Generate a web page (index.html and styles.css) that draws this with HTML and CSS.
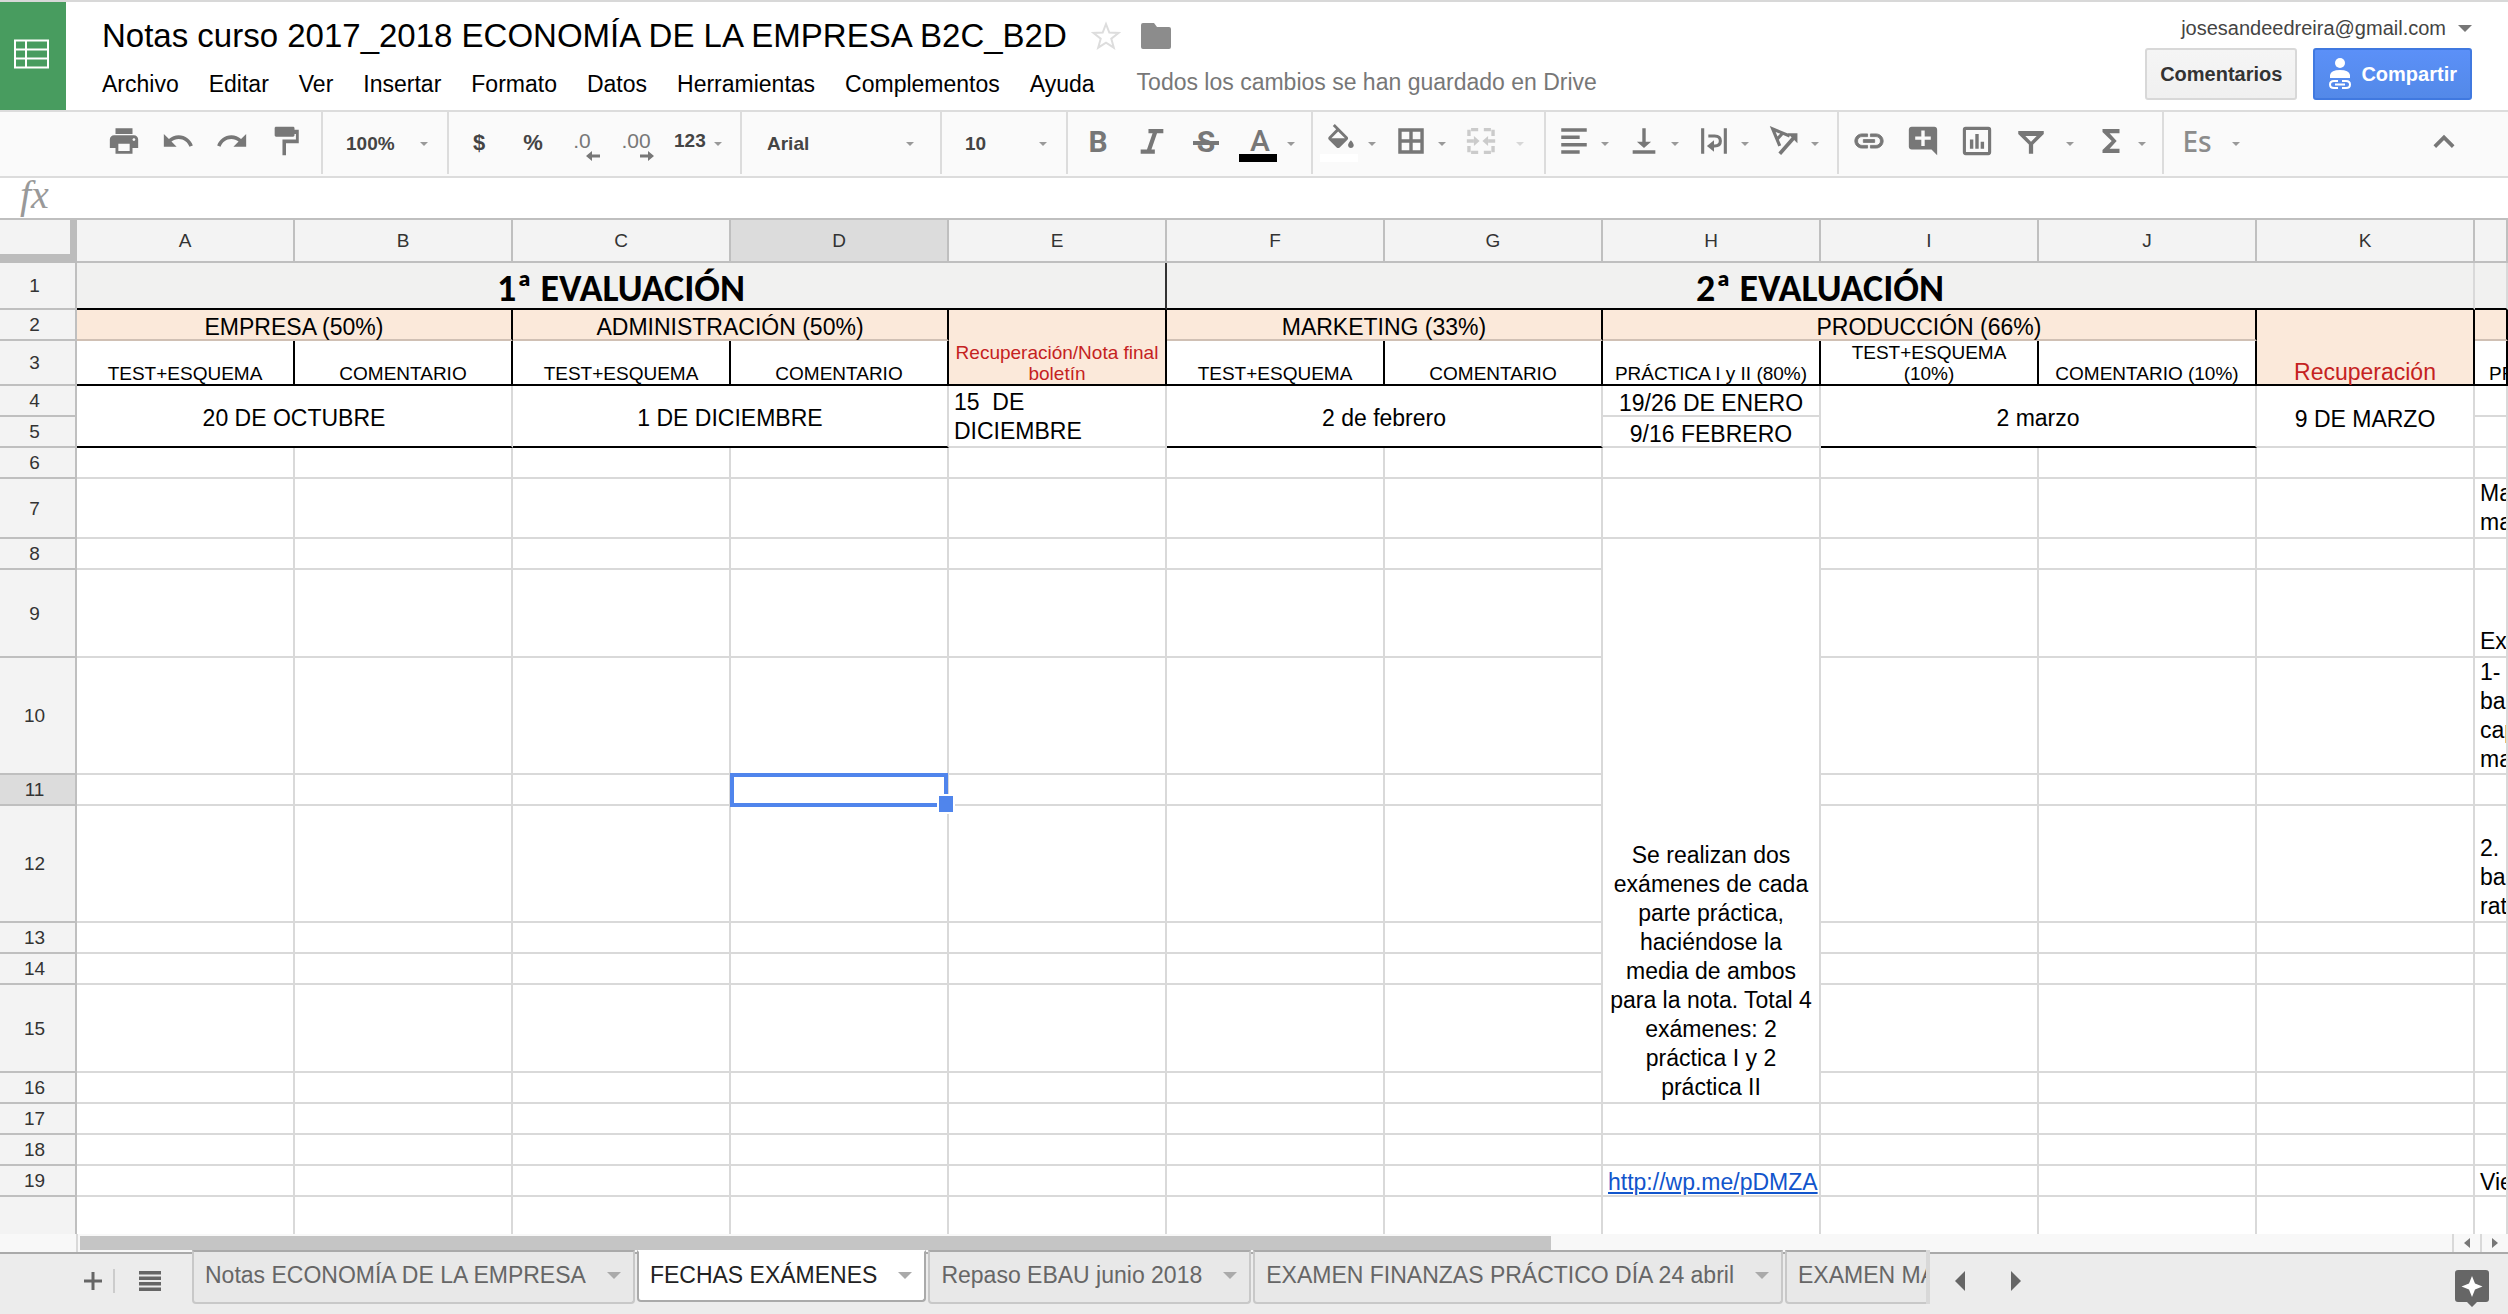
FILE: index.html
```html
<!DOCTYPE html>
<html lang="es">
<head>
    <meta charset="UTF-8">
    <meta name="viewport" content="width=device-width, initial-scale=1.0">
    <title>Notas curso 2017_2018 ECONOMÍA DE LA EMPRESA B2C_B2D</title>
    <link rel="stylesheet" href="styles.css">
</head>
<body>
    <header class="header">
        <a class="logo" href="#" aria-label="Hojas de cálculo">
            <svg width="35" height="30" viewBox="0 0 35 30" fill="none" stroke="#fff" stroke-width="2">
                <path d="M1 1.500H34V28.500H1ZM1 10.500H34M1 19.500H34M12 1V29"/>
            </svg>
        </a>
        <div class="header-main">
            <div class="title-row">
                <h1 class="title">Notas curso 2017_2018 ECONOMÍA DE LA EMPRESA B2C_B2D</h1>
                <button class="title-btn" aria-label="Destacar">
                    <svg width="30" height="30" viewBox="0 0 30 30" fill="none" stroke="#ddd" stroke-width="2">
                        <path d="M15 3l3.300 8.600 9.200.400-7.200 5.700 2.500 9L15 21.600l-7.800 5.100 2.500-9L2.500 12l9.200-.4z"/>
                    </svg>
                </button>
                <button class="title-btn" aria-label="Carpeta">
                    <svg width="30" height="26" viewBox="0 0 30 26" fill="#8c8c8c">
                        <path d="M2 0h11l3 4h12q2 0 2 2v18q0 2-2 2H2q-2 0-2-2V2q0-2 2-2z"/>
                    </svg>
                </button>
            </div>
            <nav class="menu">
                <button>Archivo</button>
                <button>Editar</button>
                <button>Ver</button>
                <button>Insertar</button>
                <button>Formato</button>
                <button>Datos</button>
                <button>Herramientas</button>
                <button>Complementos</button>
                <button>Ayuda</button>
                <span class="saved">Todos los cambios se han guardado en Drive</span>
            </nav>
        </div>
        <div class="account">
            <button class="email">josesandeedreira@gmail.com <span class="triangle"></span></button>
            <div class="account-btns">
                <button class="btn">Comentarios</button>
                <button class="btn btn-share">
                    <svg width="24" height="32" viewBox="0 0 24 32" fill="#fff">
                        <ellipse cx="12" cy="5" rx="5" ry="5"/>
                        <path d="M2 20v-3q1-5 10-5t10 5v3z"/>
                        <path d="M10 23H6q-4 0-4 3.500T6 30h4M14 23h4q4 0 4 3.500T18 30h-4M7 26.500h10" fill="none" stroke="#fff" stroke-width="2"/>
                    </svg>
                    Compartir
                </button>
            </div>
        </div>
    </header>

    <div class="toolbar">
        <div class="group group-first">
            <button class="tool" aria-label="Imprimir"><svg class="icon" viewBox="0 0 24 24"><path d="M19 8H5c-1.660 0-3 1.340-3 3v6h4v4h12v-4h4v-6c0-1.660-1.340-3-3-3zm-3 11H8v-5h8v5zm3-7c-.55 0-1-.45-1-1s.45-1 1-1 1 .45 1 1-.45 1-1 1zm-1-9H6v4h12V3z"/></svg></button>
            <button class="tool" aria-label="Deshacer"><svg class="icon" viewBox="0 0 24 24"><path d="M12.500 8c-2.650 0-5.050.99-6.900 2.600L2 7v9h9l-3.620-3.620c1.390-1.160 3.160-1.880 5.120-1.880 3.540 0 6.550 2.310 7.600 5.500l2.370-.78C21.080 11.030 17.150 8 12.500 8z"/></svg></button>
            <button class="tool" aria-label="Rehacer"><svg class="icon" viewBox="0 0 24 24"><path d="M18.400 10.600C16.550 8.990 14.150 8 11.500 8c-4.650 0-8.580 3.030-9.960 7.220L3.900 16c1.050-3.190 4.050-5.500 7.600-5.500 1.950 0 3.730.72 5.120 1.880L13 16h9V7l-3.600 3.600z"/></svg></button>
            <button class="tool" aria-label="Copiar formato"><svg class="icon" viewBox="0 0 24 24"><path d="M18 4V3c0-.55-.45-1-1-1H5c-.55 0-1 .45-1 1v5c0 .55.45 1 1 1h12c.55 0 1-.45 1-1V7h1v4H9.500v11H12v-8.500h9V4h-3z"/></svg></button>
        </div>
        <div class="group">
            <label class="pick pick-small">
                <select aria-label="Zoom"><option>100%</option></select>
                <span class="caret"></span>
            </label>
        </div>
        <div class="group">
            <button class="tool tool-text">$</button>
            <button class="tool tool-text">%</button>
            <button class="tool decimals">.0<svg width="14" height="10" viewBox="0 0 14 10"><path d="M6 0v3.500h8v3H6V10L0 5z"/></svg></button>
            <button class="tool decimals">.00<svg width="14" height="10" viewBox="0 0 14 10"><path d="M8 0v3.500H0v3h8V10l6-5z"/></svg></button>
            <button class="tool tool-drop number-format">123 <span class="caret"></span></button>
        </div>
        <div class="group">
            <label class="pick pick-font">
                <select aria-label="Fuente"><option>Arial</option></select>
                <span class="caret"></span>
            </label>
        </div>
        <div class="group">
            <label class="pick pick-small">
                <select aria-label="Tamaño de fuente"><option>10</option></select>
                <span class="caret"></span>
            </label>
        </div>
        <div class="group">
            <button class="tool letter letter-bold">B</button>
            <button class="tool" aria-label="Cursiva"><svg class="icon line-icon" viewBox="0 0 24 24"><path d="M9.500 5H20M4 19.500H14M14.500 5L9.500 19.500" stroke-width="3"/></svg></button>
            <button class="tool letter letter-bold strike">S</button>
            <button class="tool tool-drop letter"><span class="slot color-text">A</span><span class="caret"></span></button>
        </div>
        <div class="group group-tight">
            <button class="tool tool-drop" aria-label="Color de relleno"><span class="slot color-fill"><svg class="icon" viewBox="0 0 24 24"><path d="M16.560 8.940L7.620 0 6.210 1.410l2.380 2.380-5.150 5.150c-.59.59-.59 1.540 0 2.120l5.500 5.500c.29.29.68.44 1.060.44s.77-.15 1.060-.44l5.500-5.500c.59-.58.59-1.530 0-2.120zM5.210 10L10 5.210 14.790 10H5.210zM19 11.500s-2 2.170-2 3.500c0 1.100.9 2 2 2s2-.9 2-2c0-1.330-2-3.500-2-3.500z"/></svg></span><span class="caret"></span></button>
            <button class="tool tool-drop" aria-label="Bordes"><span class="slot"><svg class="icon line-icon" viewBox="0 0 24 24"><path d="M4.200 4.200H19.800V19.800H4.200ZM12 4V20M4 12H20" stroke-width="2.400"/></svg></span><span class="caret"></span></button>
            <button class="tool tool-drop tool-wide" aria-label="Combinar celdas" disabled><span class="slot"><svg class="icon line-icon" viewBox="0 0 24 24"><path d="M10 4H3.500V8.500M14 4H20.500V8.500M10 20H3.500V15.500M14 20H20.500V15.500" stroke-width="2.400" stroke-dasharray="5 1.500"/><path d="M2 12H7M22 12H17" stroke-width="2.400"/><path class="solid" d="M7 8.500L11 12L7 15.500ZM17 8.500L13 12L17 15.500Z"/></svg></span><span class="caret"></span></button>
        </div>
        <div class="group group-tight">
            <button class="tool tool-drop" aria-label="Alineación horizontal"><span class="slot"><svg class="icon" viewBox="0 0 24 24"><path d="M3 3h18v2.400H3zM3 8.200h13v2.400H3zM3 13.400h18v2.400H3zM3 18.600h13V21H3z"/></svg></span><span class="caret"></span></button>
            <button class="tool tool-drop" aria-label="Alineación vertical"><span class="slot"><svg class="icon" viewBox="0 0 24 24"><path d="M10.800 3h2.400v9.500H17L12 17l-5-4.500h3.800zM4 18.600h16V21H4z"/></svg></span><span class="caret"></span></button>
            <button class="tool tool-drop" aria-label="Ajuste de texto"><span class="slot"><svg class="icon line-icon" viewBox="0 0 24 24"><path d="M4 3V21M20 3V21M8 8.500H12.500Q16.500 8.500 16.500 12T12.500 15.500H11" stroke-width="2.200"/><path class="solid" d="M7 15.500L12 11.500V19.500Z"/></svg></span><span class="caret"></span></button>
            <button class="tool tool-drop" aria-label="Rotación de texto"><span class="slot"><svg class="icon line-icon" viewBox="0 0 24 24"><path d="M9 15.500L4 3.500L16 8.500M7 11L11 6.500" stroke-width="2.200"/><path d="M9 21L20 8.500" stroke-width="2.600"/><path class="solid" d="M21.500 6.500V13.500L14.500 6.500Z"/></svg></span><span class="caret"></span></button>
        </div>
        <div class="group">
            <button class="tool" aria-label="Insertar enlace"><svg class="icon" viewBox="0 0 24 24"><path d="M3.900 12c0-1.710 1.390-3.100 3.100-3.100h4V7H7c-2.760 0-5 2.240-5 5s2.240 5 5 5h4v-1.900H7c-1.710 0-3.100-1.390-3.100-3.100zM8 13h8v-2H8v2zm9-6h-4v1.900h4c1.710 0 3.100 1.390 3.100 3.100s-1.390 3.100-3.100 3.100h-4V17h4c2.760 0 5-2.240 5-5s-2.240-5-5-5z" stroke="#777" stroke-width=".6"/></svg></button>
            <button class="tool" aria-label="Insertar comentario"><svg class="icon" viewBox="0 0 24 24"><path d="M21.990 4c0-1.100-.89-2-1.990-2H4c-1.100 0-2 .9-2 2v12c0 1.100.9 2 2 2h14l4 4-.01-18zM17.500 11.200h-4.300v4.300h-2.400v-4.300H6.500V8.800h4.300V4.500h2.400v4.300h4.300z"/></svg></button>
            <button class="tool" aria-label="Insertar gráfico"><svg class="icon" viewBox="0 0 24 24"><path fill-rule="evenodd" d="M4 2h16q2 0 2 2v16q0 2-2 2H4q-2 0-2-2V4q0-2 2-2zM4.200 4.200V19.800H19.800V4.200zM7 11h2.400v6.500H7zM10.800 7h2.400v10.500h-2.400zM14.600 12.500H17v5h-2.400z"/></svg></button>
            <button class="tool tool-drop tool-wide" aria-label="Filtrar"><span class="slot"><svg class="icon" viewBox="0 0 24 24"><path fill-rule="evenodd" d="M3 5h18v2l-7.500 7.500V21h-3v-6.500L3 7zM8 8.500l4 4 4-4z"/></svg></span><span class="caret"></span></button>
            <button class="tool tool-drop" aria-label="Funciones"><span class="slot"><svg class="icon" viewBox="0 0 24 24"><path d="M18 3.500H6v2.200L12.500 12 6 18.300v2.200h12v-3h-7l5-5.500-5-5.500h7z"/></svg></span><span class="caret"></span></button>
        </div>
        <div class="group group-last">
            <button class="tool tool-drop tool-wide lang"><span class="slot">Es</span><span class="caret"></span></button>
        </div>
        <button class="tool collapse" aria-label="Ocultar menús"><svg class="icon line-icon" viewBox="0 0 24 24"><path d="M5.500 16L12 9.500L18.500 16" stroke-width="2.600"/></svg></button>
    </div>

    <div class="formula">
        <label class="fx" for="formula">fx</label>
        <input id="formula" type="text">
    </div>

    <main class="sheet">
        <table>
            <thead>
                <tr>
                    <th class="corner"></th>
                    <th>A</th>
                    <th>B</th>
                    <th>C</th>
                    <th class="current">D</th>
                    <th>E</th>
                    <th>F</th>
                    <th>G</th>
                    <th>H</th>
                    <th>I</th>
                    <th>J</th>
                    <th>K</th>
                    <th class="rest"></th>
                </tr>
            </thead>
            <tbody>
                <tr class="row-term">
                    <th>1</th>
                    <td class="term end" colspan="5">1ª EVALUACIÓN</td>
                    <td class="term" colspan="6">2ª EVALUACIÓN</td>
                    <td class="term"></td>
                </tr>
                <tr>
                    <th>2</th>
                    <td class="block" colspan="2">EMPRESA (50%)</td>
                    <td class="block" colspan="2">ADMINISTRACIÓN (50%)</td>
                    <td class="block retake small" rowspan="2">Recuperación/Nota final boletín</td>
                    <td class="block" colspan="2">MARKETING (33%)</td>
                    <td class="block" colspan="3">PRODUCCIÓN (66%)</td>
                    <td class="block retake" rowspan="2">Recuperación</td>
                    <td class="block"></td>
                </tr>
                <tr class="row-tests">
                    <th>3</th>
                    <td>TEST+ESQUEMA</td>
                    <td>COMENTARIO</td>
                    <td>TEST+ESQUEMA</td>
                    <td>COMENTARIO</td>
                    <td>TEST+ESQUEMA</td>
                    <td>COMENTARIO</td>
                    <td>PRÁCTICA I y II (80%)</td>
                    <td>TEST+ESQUEMA<br>(10%)</td>
                    <td>COMENTARIO (10%)</td>
                    <td class="cut">PR</td>
                </tr>
                <tr>
                    <th>4</th>
                    <td class="date underline" colspan="2" rowspan="2">20 DE OCTUBRE</td>
                    <td class="date underline" colspan="2" rowspan="2">1 DE DICIEMBRE</td>
                    <td class="spaced" rowspan="2">15  DE<br>DICIEMBRE</td>
                    <td class="date underline" colspan="2" rowspan="2">2 de febrero</td>
                    <td class="date">19/26 DE ENERO</td>
                    <td class="date underline" colspan="2" rowspan="2">2 marzo</td>
                    <td class="date" rowspan="2">9 DE MARZO</td>
                    <td></td>
                </tr>
                <tr>
                    <th>5</th>
                    <td class="date">9/16 FEBRERO</td>
                    <td></td>
                </tr>
                <tr>
                    <th>6</th>
                    <td></td><td></td><td></td><td></td><td></td><td></td><td></td><td></td><td></td><td></td><td></td><td></td>
                </tr>
                <tr class="lines-2">
                    <th>7</th>
                    <td></td><td></td><td></td><td></td><td></td><td></td><td></td><td></td><td></td><td></td><td></td>
                    <td class="cut"><div>Ma<br>ma</div></td>
                </tr>
                <tr>
                    <th>8</th>
                    <td></td><td></td><td></td><td></td><td></td><td></td><td></td>
                    <td class="note" rowspan="9">Se realizan dos exámenes de cada parte práctica, haciéndose la media de ambos para la nota. Total 4 exámenes: 2 práctica I y 2 práctica II</td>
                    <td></td><td></td><td></td><td></td>
                </tr>
                <tr class="lines-3">
                    <th>9</th>
                    <td></td><td></td><td></td><td></td><td></td><td></td><td></td><td></td><td></td><td></td>
                    <td class="cut"><div>Ex</div></td>
                </tr>
                <tr class="lines-4">
                    <th>10</th>
                    <td></td><td></td><td></td><td></td><td></td><td></td><td></td><td></td><td></td><td></td>
                    <td class="cut"><div>1-<br>ba<br>cap<br>ma</div></td>
                </tr>
                <tr>
                    <th class="current">11</th>
                    <td></td><td></td><td></td>
                    <td class="selected"><span class="selection"></span></td>
                    <td></td><td></td><td></td><td></td><td></td><td></td><td></td>
                </tr>
                <tr class="lines-4">
                    <th>12</th>
                    <td></td><td></td><td></td><td></td><td></td><td></td><td></td><td></td><td></td><td></td>
                    <td class="cut"><div>2.<br>ba<br>rat</div></td>
                </tr>
                <tr>
                    <th>13</th>
                    <td></td><td></td><td></td><td></td><td></td><td></td><td></td><td></td><td></td><td></td><td></td>
                </tr>
                <tr>
                    <th>14</th>
                    <td></td><td></td><td></td><td></td><td></td><td></td><td></td><td></td><td></td><td></td><td></td>
                </tr>
                <tr class="lines-3">
                    <th>15</th>
                    <td></td><td></td><td></td><td></td><td></td><td></td><td></td><td></td><td></td><td></td><td></td>
                </tr>
                <tr>
                    <th>16</th>
                    <td></td><td></td><td></td><td></td><td></td><td></td><td></td><td></td><td></td><td></td><td></td>
                </tr>
                <tr>
                    <th>17</th>
                    <td></td><td></td><td></td><td></td><td></td><td></td><td></td><td></td><td></td><td></td><td></td><td></td>
                </tr>
                <tr>
                    <th>18</th>
                    <td></td><td></td><td></td><td></td><td></td><td></td><td></td><td></td><td></td><td></td><td></td><td></td>
                </tr>
                <tr>
                    <th>19</th>
                    <td></td><td></td><td></td><td></td><td></td><td></td><td></td>
                    <td class="cut link"><a href="#">http://wp.me/pDMZA</a></td>
                    <td></td><td></td><td></td>
                    <td class="cut link">Vie</td>
                </tr>
                <tr class="lines-3">
                    <th></th>
                    <td></td><td></td><td></td><td></td><td></td><td></td><td></td><td></td><td></td><td></td><td></td><td></td>
                </tr>
            </tbody>
        </table>
    </main>

    <div class="scrollbar">
        <div class="scroll-track"><div class="scroll-thumb"></div></div>
        <button class="scroll-btn" aria-label="Izquierda"><svg width="6" height="10" viewBox="0 0 6 10"><path d="M6 0v10L0 5z"/></svg></button>
        <button class="scroll-btn" aria-label="Derecha"><svg width="6" height="10" viewBox="0 0 6 10"><path d="M0 0v10l6-5z"/></svg></button>
    </div>

    <footer class="bottom">
        <button class="sheet-btn sheet-add" aria-label="Añadir hoja"><svg width="18" height="18" viewBox="0 0 18 18"><path d="M7.500 0h3v7.500H18v3h-7.500V18h-3v-7.500H0v-3h7.500z"/></svg></button>
        <button class="sheet-btn sheet-all" aria-label="Todas las hojas"><svg width="22" height="20" viewBox="0 0 22 20"><path d="M0 0h22v3.500H0zM0 5.500h22V9H0zM0 11h22v3.500H0zM0 16.500h22V20H0z"/></svg></button>
        <div class="tabs">
            <button class="tab">Notas ECONOMÍA DE LA EMPRESA <span class="triangle"></span></button>
            <button class="tab tab-active">FECHAS EXÁMENES <span class="triangle"></span></button>
            <button class="tab">Repaso EBAU junio 2018 <span class="triangle"></span></button>
            <button class="tab">EXAMEN FINANZAS PRÁCTICO DÍA 24 abril <span class="triangle"></span></button>
            <button class="tab tab-cut">EXAMEN MA</button>
        </div>
        <div class="tabs-nav">
            <button aria-label="Hojas anteriores"><svg width="10" height="20" viewBox="0 0 10 20"><path d="M10 0v20L0 10z"/></svg></button>
            <button aria-label="Hojas siguientes"><svg width="10" height="20" viewBox="0 0 10 20"><path d="M0 0v20l10-10z"/></svg></button>
        </div>
        <button class="explore" aria-label="Explorar">
            <svg width="34" height="38" viewBox="0 0 34 38">
                <path fill="#666" d="M3 0h28q3 0 3 3v26q0 3-3 3h-9l-5 5-5-5H3q-3 0-3-3V3q0-3 3-3z"/>
                <path fill="#fff" d="M17 6l3 7.500 7.500 3L20 19.500 17 27l-3-7.500-7.500-3 7.500-3z"/>
            </svg>
        </button>
    </footer>
</body>
</html>
```
FILE: styles.css
```css
* {
    box-sizing: border-box;
}
body {
    margin: 0;
    height: 100vh;
    display: flex;
    flex-direction: column;
    overflow: hidden;
    font-family: "Liberation Sans", Arial, sans-serif;
    font-size: 23px;
    color: #000;
    background-color: #fff;
}
button, input, select {
    font: inherit;
    color: inherit;
    border: 0;
    padding: 0;
    background: none;
}
svg {
    display: block;
}

/* header */
.header {
    flex: none;
    display: flex;
    height: 112px;
    border-top: 2px solid #d8d8d8;
    border-bottom: 2px solid #dcdcdc;
}
.logo {
    width: 66px;
    padding-right: 4px;
    padding-bottom: 4px;
    display: flex;
    align-items: center;
    justify-content: center;
    background-color: #489c5f;
}
.header-main {
    padding: 12px 0 0 36px;
}
.title-row {
    display: flex;
    align-items: center;
    height: 44px;
}
.title {
    margin: 0 4px 0 0;
    font-size: 33px;
    font-weight: normal;
    line-height: 44px;
}
.title-btn {
    margin: 0 0 0 20px;
}
.menu {
    display: flex;
    align-items: center;
    gap: 30px;
    margin-top: 8px;
    line-height: 32px;
}
.saved {
    margin-left: 12px;
    padding-bottom: 4px;
    color: #777;
}
.account {
    margin-left: auto;
    padding: 12px 36px 0 0;
    display: flex;
    flex-direction: column;
    align-items: flex-end;
    gap: 6px;
    font-size: 20px;
}
.email {
    display: flex;
    align-items: center;
    gap: 12px;
    line-height: 28px;
    color: #444;
}
.triangle {
    border: 7px solid transparent;
    border-top-color: #777;
    border-bottom: 0;
}
.account-btns {
    display: flex;
    gap: 16px;
}
.btn {
    display: flex;
    align-items: center;
    gap: 9px;
    height: 52px;
    padding: 0 13px;
    border: 2px solid #d8d8d8;
    border-radius: 3px;
    background: linear-gradient(#f5f5f5, #f0f0f0);
    color: #333;
    font-weight: bold;
}
.btn-share {
    border-color: #4079e0;
    background: linear-gradient(#5b90f8, #5389e8);
    color: #fff;
}

/* toolbar */
.toolbar {
    flex: none;
    display: flex;
    align-items: flex-start;
    height: 66px;
    border-bottom: 2px solid #dcdcdc;
    background-color: #fafafa;
    color: #444;
    font-size: 19px;
    font-weight: bold;
}
.group {
    display: flex;
    height: 62px;
    padding: 0 8px 0 3px;
    border-right: 2px solid #dcdcdc;
}
.group-first {
    padding-left: 97px;
}
.group-tight {
    padding: 0 10px 0 1px;
}
.group-last {
    padding-left: 6px;
    border-right: 0;
}
.tool {
    position: relative;
    display: flex;
    align-items: center;
    justify-content: center;
    width: 54px;
    height: 62px;
    padding-bottom: 4px;
}
.tool-text {
    padding-bottom: 0;
    font-size: 22px;
}
.tool-drop {
    width: 70px;
    justify-content: flex-start;
}
.tool-wide {
    width: 80px;
}
.tool-wide .slot {
    margin-right: 8px;
}
.slot {
    position: relative;
    display: flex;
    justify-content: center;
    width: 54px;
}
.icon {
    width: 34px;
    height: 34px;
    fill: #777;
}
.line-icon {
    fill: none;
    stroke: #777;
}
.line-icon .solid {
    fill: #777;
    stroke: none;
}
.tool:disabled {
    opacity: 0.35;
}
.caret {
    flex: none;
    margin-top: 5px;
    border: 4px solid transparent;
    border-top-color: #999;
    border-bottom: 0;
}
.pick {
    display: flex;
    align-items: center;
    padding: 0 11px 0 20px;
}
.pick .caret {
    margin-top: 2px;
}
.pick select {
    flex: 1;
    min-width: 0;
    appearance: none;
}
.pick-small {
    width: 113px;
}
.pick-font {
    width: 187px;
    padding: 0 18px 0 22px;
}
.decimals {
    padding-right: 10px;
    font-size: 21px;
    font-weight: normal;
    color: #777;
}
.decimals svg {
    position: absolute;
    right: 14px;
    bottom: 13px;
    fill: #777;
}
.number-format {
    width: 64px;
    gap: 8px;
    padding-left: 6px;
}
.letter {
    color: #777;
    font-family: Roboto, sans-serif;
    font-size: 30px;
}
.letter-bold {
    font-weight: bold;
}
.strike::after {
    content: "";
    position: absolute;
    top: 29px;
    left: 14px;
    width: 26px;
    height: 4px;
    background-color: #777;
}
.color-text {
    font-weight: 500;
    line-height: 30px;
}
.color-text::after,
.color-fill::after {
    content: "";
    position: absolute;
    top: 28px;
    left: 6px;
    width: 38px;
    height: 8px;
    background-color: #000;
}
.color-fill::after {
    top: 30px;
    background-color: #fff;
}
.lang {
    color: #8c8c8c;
    font-family: "Noto Sans", sans-serif;
    font-size: 28px;
    font-weight: 500;
}
.collapse {
    margin-left: auto;
    margin-right: 37px;
}

/* formula bar */
.formula {
    flex: none;
    display: flex;
    height: 42px;
    border-bottom: 2px solid #bfbfbf;
}
.fx {
    width: 66px;
    padding-left: 20px;
    color: #999;
    font-family: "Liberation Serif", serif;
    font-size: 40px;
    font-style: italic;
    line-height: 34px;
}
.formula input {
    flex: 1;
    outline: 0;
}

/* grid */
.sheet {
    flex: 1;
    min-height: 0;
    overflow: hidden;
}
table {
    width: 100%;
    table-layout: fixed;
    border-collapse: separate;
    border-spacing: 0;
    line-height: 29px;
}
tr {
    height: 31px;
}
th, td {
    padding: 0 5px;
    border-right: 2px solid #d9d9d9;
    border-bottom: 2px solid #d9d9d9;
}
th {
    width: 218px;
    border-color: #bfbfbf;
    background-color: #f3f3f3;
    color: #333;
    font-size: 19px;
    font-weight: normal;
}
tbody th {
    padding-right: 11px;
}
td {
    vertical-align: bottom;
}
thead tr {
    height: 43px;
}
.corner {
    width: 77px;
    border-right: 7px solid #bcbcbc;
    border-bottom: 9px solid #bcbcbc;
}
.rest {
    width: auto;
}
.current {
    background-color: #dcdcdc;
}
.row-term {
    height: 47px;
}
.row-tests {
    height: 45px;
}
.lines-2 {
    height: 59px;
}
.lines-3 {
    height: 88px;
}
.lines-4 {
    height: 117px;
}
.term {
    padding-top: 6px;
    background-color: #f1f1f0;
    border-bottom-color: #000;
    font-family: Carlito, Calibri, Lato, sans-serif;
    font-size: 38px;
    font-weight: bold;
    line-height: 39px;
    text-align: center;
}
.end {
    border-right-color: #333;
}
.block {
    padding-top: 6px;
    background-color: #fbe9da;
    border-right-color: #000;
    border-bottom-color: #d0c0b4;
    line-height: 23px;
    text-align: center;
}
.retake {
    border-bottom-color: #000;
    color: #c5221f;
}
.small {
    font-size: 19px;
    line-height: 21px;
}
.row-tests td {
    border-right-color: #000;
    border-bottom-color: #000;
    font-size: 19px;
    line-height: 21px;
    text-align: center;
}
.date {
    padding-top: 6px;
    line-height: 23px;
    text-align: center;
    vertical-align: middle;
}
.link {
    padding-top: 4px;
    line-height: 25px;
}
.underline {
    padding-top: 4px;
    border-bottom-color: #000;
}
.spaced {
    white-space: pre-wrap;
}
.note {
    text-align: center;
}
.cut {
    overflow: hidden;
    white-space: nowrap;
}
.row-tests .cut {
    padding-left: 14px;
    text-align: left;
}
.lines-4 .cut div {
    max-height: 115px;
}
.cut a {
    color: #1155cc;
}
.selected {
    position: relative;
}
.selection {
    position: absolute;
    top: -2px;
    right: -1px;
    bottom: -3px;
    left: -1px;
    border: 4px solid #5085ec;
}
.selection::after {
    content: "";
    position: absolute;
    right: -11px;
    bottom: -11px;
    width: 14px;
    height: 16px;
    border: 2px solid #fff;
    background-color: #5085ec;
}

/* horizontal scroll */
.scrollbar {
    flex: none;
    display: flex;
    height: 18px;
    background-color: #f8f8f8;
}
.scroll-track {
    flex: 1;
    margin-left: 76px;
    padding: 2px 0 0 2px;
    border-left: 2px solid #d9d9d9;
}
.scroll-thumb {
    width: 62%;
    height: 14px;
    background-color: #c5c5c5;
}
.scroll-btn {
    display: flex;
    align-items: center;
    justify-content: center;
    width: 28px;
    border-left: 2px solid #d9d9d9;
    fill: #777;
}

/* sheet tabs */
.bottom {
    flex: none;
    display: flex;
    align-items: flex-start;
    height: 62px;
    border-top: 2px solid #aaa;
    background-color: #ececec;
}
.sheet-btn {
    display: flex;
    align-items: center;
    height: 24px;
    margin-top: 15px;
    fill: #666;
}
.sheet-add {
    width: 31px;
    margin-left: 84px;
    border-right: 2px solid #ccc;
}
.sheet-all {
    width: 53px;
    margin-left: 24px;
}
.tabs {
    flex: none;
    display: flex;
    align-items: flex-start;
    gap: 2px;
    width: 1738px;
    margin-top: -4px;
    overflow: hidden;
    border-right: 4px solid #d8d8d8;
}
.tab {
    flex: none;
    display: flex;
    align-items: center;
    gap: 21px;
    height: 54px;
    padding: 0 12px 4px 11px;
    border: 2px solid #c8c8c8;
    border-top-color: #aaa;
    border-radius: 0 0 4px 4px;
    background-color: #e8e8e8;
    color: #666;
    white-space: nowrap;
}
.tab .triangle {
    border-top-color: #aaa;
}
.tab-active {
    height: 52px;
    padding-bottom: 2px;
    border-color: #aaa;
    border-top-color: #fff;
    background-color: #fff;
    color: #222;
}
.tabs-nav {
    display: flex;
    gap: 46px;
    margin: 17px 0 0 25px;
    fill: #666;
}
.explore {
    margin: 16px 19px 0 auto;
}
```
